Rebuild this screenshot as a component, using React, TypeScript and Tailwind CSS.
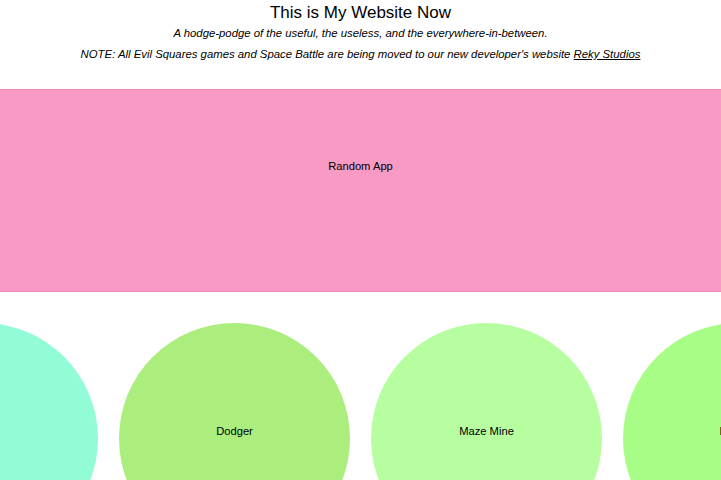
import React from "react";

const circles = [
  { label: "", color: "bg-[#92fcd7]" },
  { label: "Dodger", color: "bg-[#abee7d]" },
  { label: "Maze Mine", color: "bg-[#b6fe9f]" },
  { label: "Bounce", color: "bg-[#a8fd87]" },
];

export default function App() {
  return (
    <div
      className="w-[721px] h-[480px] overflow-hidden bg-white text-black"
      style={{ fontFamily: '"Liberation Sans", Arial, Helvetica, sans-serif' }}
    >
      <header className="pt-[2px] text-center">
        <h1 className="text-[17px] leading-[21px] font-normal">This is My Website Now</h1>
        <p className="text-[11.35px] leading-[21px] italic">
          A hodge-podge of the useful, the useless, and the everywhere-in-between.
        </p>
        <p className="text-[11.35px] leading-[21px] italic">
          NOTE: All Evil Squares games and Space Battle are being moved to our new developer's website{" "}
          <a className="underline">Reky Studios</a>
        </p>
      </header>

      <section className="mt-[24px] h-[203px] bg-[#f99ac5] border-y border-[#f28dbb] pt-[68px] text-center text-[11.2px] leading-[16px]">
        Random App
      </section>

      <div className="mt-[31px] flex gap-[21px] ml-[-133px]">
        {circles.map((c, i) => (
          <div
            key={i}
            className={`shrink-0 w-[231px] h-[231px] rounded-full ${c.color} pt-[100px] text-center text-[11.2px] leading-[16px]`}
          >
            {c.label}
          </div>
        ))}
      </div>
    </div>
  );
}
